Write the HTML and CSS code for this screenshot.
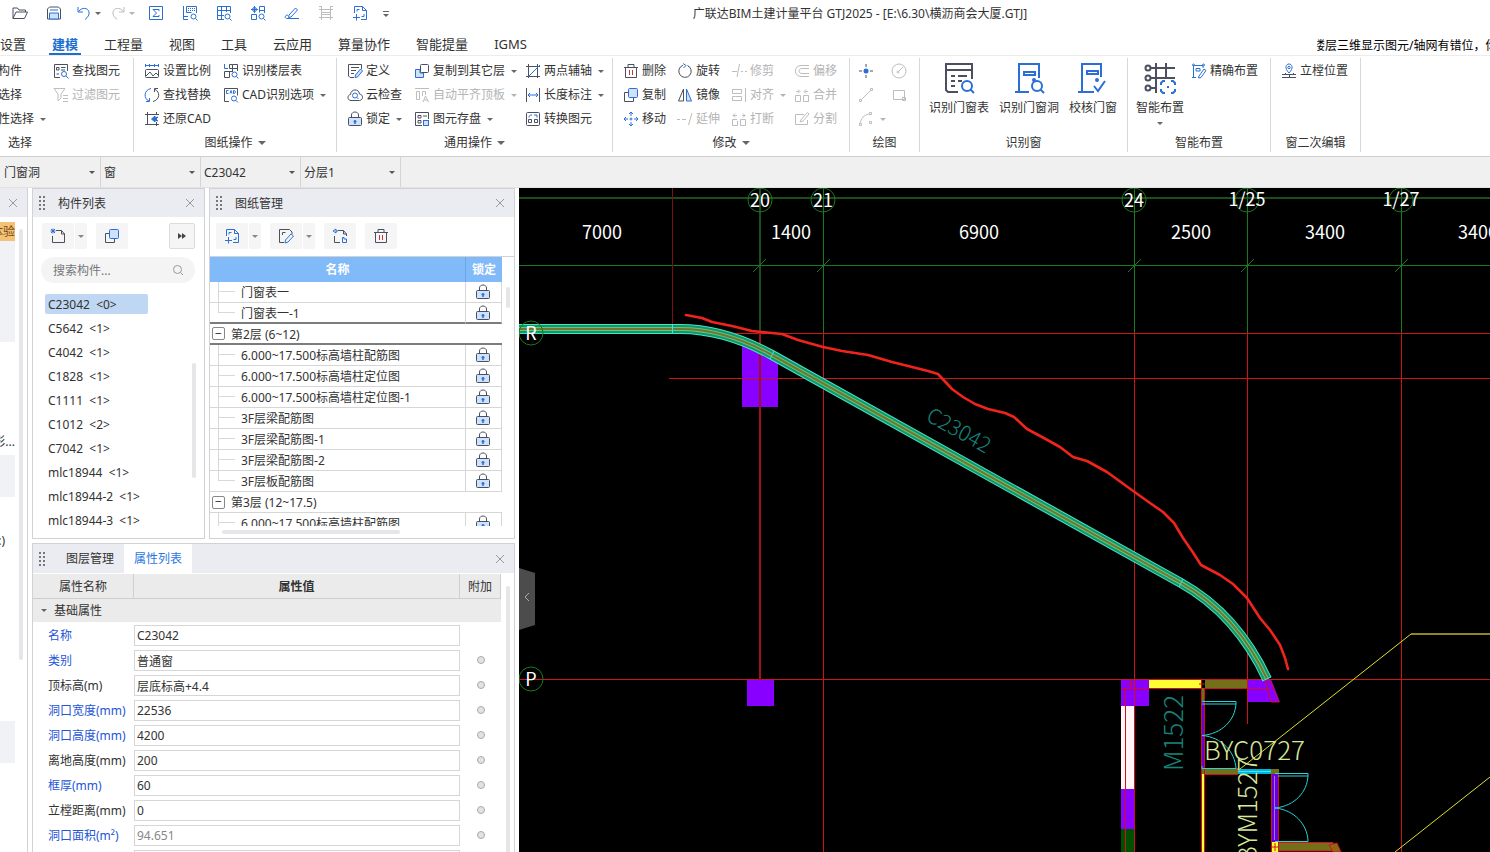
FILE: index.html
```html
<!DOCTYPE html>
<html lang="zh-CN">
  <head>
    <meta charset="utf-8">
    <title>广联达BIM土建计量平台 GTJ2025</title>
    <link rel="stylesheet" href="styles.css">
  </head>
  <body>
    <!-- icon sprite -->
    <svg class="sprite" aria-hidden="true">
      <symbol id="open" viewBox="0 0 16 16"><path d="M1 13.500V3h4.500l1.500 2h6.500v2M1 13.500h11.500L15.500 7H4z"/></symbol>
      <symbol id="save" viewBox="0 0 16 16"><path d="M1.500 14V4l2-2h9l2 2v10z"/><path class="b l" d="M3.500 14V8h9v6z"/><path class="b" d="M4 5h8"/></symbol>
      <symbol id="undo" viewBox="0 0 16 16"><path d="M2 2v5h5M2.500 6.500C6 2 12 2.500 13 7c.5 3-1 5-4 7.500"/></symbol>
      <symbol id="redo" viewBox="0 0 16 16"><path d="M14 2v5H9M13.500 6.500C10 2 4 2.500 3 7c-.5 3 1 5 4 7.500"/></symbol>
      <symbol id="sum" viewBox="0 0 16 16"><path class="b" d="M1.500 1.500h13v13h-13zM11 6V4.500H5L8.500 8 5 11.500h6V10"/></symbol>
      <symbol id="tablefind" viewBox="0 0 16 16"><path class="b" d="M1.500 1v13.500H6M1.500 11.500H6M4.500 1.500h10V8M4.500 1.500v6h5"/><path class="b" stroke-dasharray="1 1" d="M6 3.500h8M6 5.500h8"/><circle class="b" cx="11.500" cy="11.500" r="2.500"/><path class="b" d="M13.500 13.500l2 2"/></symbol>
      <symbol id="gridfind" viewBox="0 0 16 16"><path class="b" d="M8 14.500H1.500v-13h13V8M1.500 5.500h13M1.500 10.500H8M5.500 1.500v13M10.500 1.500V7"/><circle class="b" cx="11.500" cy="11.500" r="2.500"/><path class="b" d="M13.500 13.500l2 2"/></symbol>
      <symbol id="treefind" viewBox="0 0 16 16"><path class="b" d="M9.500 1.500h5V8M9.500 7.500v-6M9.500 5.500h5M1.500 9.500h5v5h-5zM1 4.500h7M4.500 1v7"/><circle class="b" cx="4.500" cy="4.500" r="2"/><circle class="b" cx="11.500" cy="11.500" r="2.500"/><path class="b" d="M13.500 13.500l2 2"/></symbol>
      <symbol id="pen" viewBox="0 0 16 16"><path class="b" d="M5 10l6.500-7 2 2L7 12l-2.500.5zM4 10c-3 0-4 3-1 3.500h12"/></symbol>
      <symbol id="fence" viewBox="0 0 16 16"><path d="M3.500 1v14M12.500 1v14M1 4.500h14M1 12.500h14M3 7.500h10M3 9.500h10M1 1.500h2M13 1.500h2"/></symbol>
      <symbol id="addsheet" viewBox="0 0 16 16"><path class="b" d="M2.500 8V1.500h8l4 4v9H9M10.500 1.500v4h4M5 6.500v-2h2.500M12 9v2.500H9.500M4.500 9v6.500M1 12.500h7"/></symbol>
      <symbol id="find" viewBox="0 0 16 16"><path d="M7 14.500H1.500v-13h13V8M3.500 4.500H6V7H3.500zM8 4.500h4.500M8 7h4M3.500 11H6"/><circle class="b" cx="11" cy="11" r="2.500"/><path class="b" d="M13 13l2.500 2.500"/></symbol>
      <symbol id="filter" viewBox="0 0 16 16"><path d="M1 1.500h11L8 7v4l-3 3V7zM10 8.500h5M10 11.500h5M10 14.500h5"/></symbol>
      <symbol id="scale" viewBox="0 0 16 16"><path class="b" d="M1 2.500h14M1.500 1v3M14.500 1v3M5.500 1v3M10.500 1v3"/><rect x="1.500" y="6.500" width="13" height="8" rx="1"/><path d="M2 13l4-4 3 4 3-3 3 3"/></symbol>
      <symbol id="replace" viewBox="0 0 16 16"><path class="b" d="M7 1.500C-.5 3-.5 12 5 14M2 14.500h3.500V11"/><path d="M9 14.500c7.500-2 7-10 2-12M14 1.500h-3.500V5"/></symbol>
      <symbol id="restore" viewBox="0 0 16 16"><path d="M3.500 1v13M1 3.500h14M12.500 1v3M1 13.500h14M12.500 11v4"/><path class="b" fill="#2b6fd6" d="M7.500 8L11 5v2l3-1-2 2 2 2-3-1v2z"/></symbol>
      <symbol id="floor" viewBox="0 0 16 16"><path class="b" d="M1.500 1v4.500H5"/><path d="M6.500 1.500h3v4h-3zM6.500 8.500v6h-5v-6H9M9.500 1.500h5V8M9.500 5.500h5M9.500 5.500V9"/><circle class="b" cx="11.500" cy="11.500" r="2.500"/><path class="b" d="M13.500 13.500l2 2"/></symbol>
      <symbol id="cadopt" viewBox="0 0 16 16"><path d="M6 14.500H1.500v-13h13v7"/><path class="b" d="M5.500 3.500h-2v3h2M7 6.500l1-3 1 3M10.500 3.500v3h1l1-1.500-1-1.500z"/><circle class="b" cx="11" cy="11.500" r="2.500"/><path class="b" d="M13 13.500l2 2"/></symbol>
      <symbol id="define" viewBox="0 0 16 16"><path d="M7 14.500H3l-1.500-1.500v-11.500h13V6M4 4.500h8M4 7.500h5M4 10.500h3"/><path class="b l" d="M8.500 12l5-6 2 2-5 6-2.500.5z"/></symbol>
      <symbol id="cloud" viewBox="0 0 16 16"><path d="M4 13.500C0 13.500 0 8 3.500 7.500 4 1.500 12 1.500 12.500 7c4 .5 4 6 0 6.500z"/><circle class="b" cx="8" cy="8.500" r="2.500"/><path class="b" d="M10 10.500l1.500 1.500"/></symbol>
      <symbol id="lock" viewBox="0 0 16 16"><path d="M4.500 7V4c0-4 7-4 7 0v3"/><rect class="l" x="1.500" y="6.500" width="13" height="8" rx="1"/><path class="b" stroke-width="1.500" d="M8 13V9M6.500 10.500h3"/></symbol>
      <symbol id="copy" viewBox="0 0 16 16"><path d="M5 5.500H1.500v9h9V11"/><rect class="b l" x="5.500" y="1.500" width="9" height="9" rx="1"/></symbol>
      <symbol id="copylayer" viewBox="0 0 16 16"><path class="b l" d="M6 6.500H1.500v8h8V10H6z"/><rect x="6.500" y="1.500" width="8" height="8" rx="1"/></symbol>
      <symbol id="aligntop" viewBox="0 0 16 16"><path d="M1 1.500h14M2.500 4.500h3v8h-3zM8.500 9V4.500h3V8M9 15l2.500-6 3 6M10 13h3.500"/></symbol>
      <symbol id="store" viewBox="0 0 16 16"><path d="M8 14.500H1.500v-13h13V8M4 4.500h3V7H4zM9 5h4M4 9.500h3V12H4z"/><rect class="b l" x="9.500" y="9.500" width="5" height="5"/></symbol>
      <symbol id="axis" viewBox="0 0 16 16"><path d="M3.500 1v14M1 3.500h14M12.500 1v14M1 13.500h14"/><path class="b" d="M3 14L15 2"/></symbol>
      <symbol id="length" viewBox="0 0 16 16"><path d="M1.500 1v14M14.500 1v14"/><path class="b" d="M3 8h10M5 6L3 8l2 2M11 6l2 2-2 2"/></symbol>
      <symbol id="convert" viewBox="0 0 16 16"><rect x="1.500" y="1.500" width="13" height="13" rx="1"/><path d="M3.500 8.500h3v3h-3zM9.500 8.500h3v3h-3z"/><path class="b" d="M4 6.500c0-2 1-2.500 3-2.500M9 4h3v2.500"/></symbol>
      <symbol id="trash" viewBox="0 0 16 16"><path d="M1 4.500h14M5 4V1.500h6V4M2.500 4v10.500h11V4"/><path class="r" d="M6.500 7v5M9.500 7v5"/></symbol>
      <symbol id="rotate" viewBox="0 0 16 16"><path d="M10.500 2.500A6.200 6.200 0 1 1 6 2.300"/><path class="b" d="M6 .5l3 2-2.500 2.500M11 3l1 1"/></symbol>
      <symbol id="mirror" viewBox="0 0 16 16"><path d="M6.500 2v12h-5z"/><path class="b l" d="M9.500 2v12h5z"/></symbol>
      <symbol id="move" viewBox="0 0 16 16"><path class="b" d="M8 1v4M8 11v4M1 8h4M11 8h4M6 3l2-2 2 2M6 13l2 2 2-2M3 6L1 8l2 2M13 6l2 2-2 2M6.500 8h3M8 6.500v3"/></symbol>
      <symbol id="trim" viewBox="0 0 16 16"><path d="M1 8.500h5M8.500 1L6 14M10 8.500h2M14 8.500h2"/></symbol>
      <symbol id="extend" viewBox="0 0 16 16"><path d="M0 8.500h3M5 8.500h4M15 2l-3.500 12"/></symbol>
      <symbol id="align" viewBox="0 0 16 16"><path d="M1.500 2.500h9v4h-9zM4.500 9.500h6v4h-9v-4zM14.500 1v14"/></symbol>
      <symbol id="break" viewBox="0 0 16 16"><path d="M6 8.500H1.500v6h5V10M9.500 8.500v6h5v-6zM2 4.500h4M4 2.500l-2 2 2 2M14 4.500h-3M12 2.500l2 2-2 2"/></symbol>
      <symbol id="offset" viewBox="0 0 16 16"><path d="M15 2.500H7C-.5 2.500-.5 13.500 7 13.500h8M15 5.500H8c-4 0-4 5 0 5h7"/></symbol>
      <symbol id="merge" viewBox="0 0 16 16"><path d="M1.500 8.500h5v6h-5zM9.500 8.500h5v6h-5zM2 4.500h3M4 2.500l2 2-2 2M14 4.500h-3M12 2.500l-2 2 2 2"/></symbol>
      <symbol id="split" viewBox="0 0 16 16"><path d="M10 3.500H1.500v10h12V9M6 11l3-1 6-7-1.500-1.500-6 6.500z"/></symbol>
      <symbol id="point" viewBox="0 0 16 16"><path d="M8 1v3M8 12v3M1 8h3M12 8h3"/><circle cx="8" cy="8" r="2.500" fill="#2b6fd6" stroke="none"/></symbol>
      <symbol id="circle" viewBox="0 0 16 16"><circle cx="8" cy="8" r="7"/><path d="M8 8l4-4"/><circle cx="7" cy="9" r="1"/></symbol>
      <symbol id="line" viewBox="0 0 16 16"><path d="M3 13L13 3"/><path d="M1.500 12.500h2v2h-2zM12.500 1.500h2v2h-2z"/></symbol>
      <symbol id="rect" viewBox="0 0 16 16"><path d="M2.500 3.500h11v9h-11zM11.500 10.500h3v3h-3z"/></symbol>
      <symbol id="arc" viewBox="0 0 16 16"><path d="M2 13C3 7 6 4 11 3M1.500 12.500h2v2h-2zM11.500 1.500h2v2h-2zM11.500 10.500h2v2h-2z"/></symbol>
      <symbol id="doorlist" viewBox="0 0 32 32"><path d="M15 30H5l-2-2V2h26v15M3 8h26M8 14h4M15 14h9M8 19h4M15 19h4M8 24h4"/><circle class="b" cx="24" cy="24" r="5"/><path class="b" d="M27.500 27.500L31 31"/></symbol>
      <symbol id="doorhole" viewBox="0 0 32 32"><path class="b" d="M2 30h14M6 30V2h20v14M11 10h11v3H11z"/><circle cx="21" cy="18" r="2" fill="#2b6fd6" stroke="none"/><circle class="b" cx="24" cy="24" r="5"/><path class="b" d="M27.500 27.500L31 31"/></symbol>
      <symbol id="doorcheck" viewBox="0 0 32 32"><path class="b" d="M1 30h16M5 30V2h19v13M10 9h11v3H10zM17 24l4 5 7-10"/><circle cx="20" cy="18" r="2" fill="#2b6fd6" stroke="none"/></symbol>
      <symbol id="smart" viewBox="0 0 32 32"><path d="M6 6h25M6 16h25M6 26h6M12 1v30M22 1v14"/><circle cx="4" cy="6" r="2.500"/><circle cx="4" cy="16" r="2.500"/><circle cx="4" cy="26" r="2.500"/><path class="b" d="M17 23v-2l2-2h2M27 19h2l2 2v2M31 27v2l-2 2h-2M21 31h-2l-2-2v-2M23 25h2"/></symbol>
      <symbol id="exact" viewBox="0 0 16 16"><path class="b" d="M1 14.500h4M2.500 14V2.500M3 2.500h9V5M5 5.500h4V8H5zM8 13l5-7 2 1.500-5 7-2.500.5z"/><circle class="b" cx="2.500" cy="2" r="1"/><circle class="b" cx="12.500" cy="2" r="1"/></symbol>
      <symbol id="pin" viewBox="0 0 16 16"><path class="b" d="M8 10C3 5 5 1 8 1s5 4 0 9z"/><circle class="b" cx="8" cy="4.500" r="1.200"/><path d="M1 11.500h14M1 14.500h14M4.500 10v2M8.500 12v2M12.500 10v2"/></symbol>
      <symbol id="newsheet" viewBox="0 0 16 16"><path d="M6 2.500h5.500l3 3.500v8.500h-12V8M11.500 2.500V6H15"/><path class="b" d="M1 1l4 4M5 1L1 5M3 .5v5M.5 3h5"/></symbol>
      <symbol id="editsheet" viewBox="0 0 16 16"><path d="M6 14.500H1.500v-13h10L14 4v2M4.500 7V4.500h3"/><path class="b" d="M7.500 12l5.500-6 2.500 2-5.500 6-3 1z"/></symbol>
      <symbol id="movesheet" viewBox="0 0 16 16"><path d="M6 2.500h5.500l3 3.500v2M11.500 2.500V6h3M2.500 8v6.500H8"/><path class="b" d="M1 3l3-2v4zM4 3h2M10.500 14.500v-5H12V11h2.500v3.500z"/></symbol>
      <symbol id="search" viewBox="0 0 12 12"><circle cx="5.500" cy="5.500" r="4"/><path d="M8.500 8.500L11 11"/></symbol>
      <symbol id="close" viewBox="0 0 10 10"><path d="M1 1l8 8M9 1L1 9"/></symbol>
      <symbol id="grip" viewBox="0 0 6 14"><path stroke-width="2" stroke-dasharray="2 2" d="M1 0v14M5 0v14"/></symbol>
    </svg>

    <header class="titlebar">
      <button class="quick"><svg class="ic"><use href="#open"/></svg></button>
      <button class="quick"><svg class="ic"><use href="#save"/></svg></button>
      <button class="quick blue"><svg class="ic"><use href="#undo"/></svg><i class="arrow"></i></button>
      <button class="quick" disabled><svg class="ic"><use href="#redo"/></svg><i class="arrow"></i></button>
      <button class="quick"><svg class="ic"><use href="#sum"/></svg></button>
      <button class="quick"><svg class="ic"><use href="#tablefind"/></svg></button>
      <button class="quick"><svg class="ic"><use href="#gridfind"/></svg></button>
      <button class="quick"><svg class="ic"><use href="#treefind"/></svg></button>
      <button class="quick"><svg class="ic"><use href="#pen"/></svg></button>
      <button class="quick" disabled><svg class="ic"><use href="#fence"/></svg></button>
      <button class="quick"><svg class="ic"><use href="#addsheet"/></svg></button>
      <button class="quick more"><i></i><i class="arrow"></i></button>
      <h1>广联达BIM土建计量平台 GTJ2025 - [E:\6.30\横沥商会大厦.GTJ]</h1>
    </header>

    <nav class="tabs">
      <a href="#">设置</a>
      <a href="#" class="active">建模</a>
      <a href="#">工程量</a>
      <a href="#">视图</a>
      <a href="#">工具</a>
      <a href="#">云应用</a>
      <a href="#">算量协作</a>
      <a href="#">智能提量</a>
      <a href="#">IGMS</a>
      <div class="notice"><span>楼层三维显示图元/轴网有错位，你</span></div>
    </nav>

    <div class="ribbon">
      <section class="group g-select">
        <div class="tools">
          <button>构件</button>
          <button><svg class="ic"><use href="#find"/></svg>查找图元</button>
          <button>选择</button>
          <button disabled><svg class="ic"><use href="#filter"/></svg>过滤图元</button>
          <button>性选择<i class="arrow"></i></button>
        </div>
        <h2>选择</h2>
      </section>
      <section class="group g-drawing">
        <div class="tools">
          <button><svg class="ic"><use href="#scale"/></svg>设置比例</button>
          <button><svg class="ic"><use href="#floor"/></svg>识别楼层表</button>
          <button><svg class="ic"><use href="#replace"/></svg>查找替换</button>
          <button><svg class="ic"><use href="#cadopt"/></svg>CAD识别选项<i class="arrow"></i></button>
          <button><svg class="ic"><use href="#restore"/></svg>还原CAD</button>
        </div>
        <h2>图纸操作<i class="arrow big"></i></h2>
      </section>
      <section class="group g-common">
        <div class="tools">
          <button><svg class="ic"><use href="#define"/></svg>定义</button>
          <button><svg class="ic"><use href="#copylayer"/></svg>复制到其它层<i class="arrow"></i></button>
          <button><svg class="ic"><use href="#axis"/></svg>两点辅轴<i class="arrow"></i></button>
          <button><svg class="ic"><use href="#cloud"/></svg>云检查</button>
          <button disabled><svg class="ic"><use href="#aligntop"/></svg>自动平齐顶板<i class="arrow"></i></button>
          <button><svg class="ic"><use href="#length"/></svg>长度标注<i class="arrow"></i></button>
          <button><svg class="ic"><use href="#lock"/></svg>锁定<i class="arrow"></i></button>
          <button><svg class="ic"><use href="#store"/></svg>图元存盘<i class="arrow"></i></button>
          <button><svg class="ic"><use href="#convert"/></svg>转换图元</button>
        </div>
        <h2>通用操作<i class="arrow big"></i></h2>
      </section>
      <section class="group g-modify">
        <div class="tools">
          <button><svg class="ic"><use href="#trash"/></svg>删除</button>
          <button><svg class="ic"><use href="#rotate"/></svg>旋转</button>
          <button disabled><svg class="ic"><use href="#trim"/></svg>修剪</button>
          <button disabled><svg class="ic"><use href="#offset"/></svg>偏移</button>
          <button><svg class="ic"><use href="#copy"/></svg>复制</button>
          <button><svg class="ic"><use href="#mirror"/></svg>镜像</button>
          <button disabled><svg class="ic"><use href="#align"/></svg>对齐<i class="arrow"></i></button>
          <button disabled><svg class="ic"><use href="#merge"/></svg>合并</button>
          <button><svg class="ic"><use href="#move"/></svg>移动</button>
          <button disabled><svg class="ic"><use href="#extend"/></svg>延伸</button>
          <button disabled><svg class="ic"><use href="#break"/></svg>打断</button>
          <button disabled><svg class="ic"><use href="#split"/></svg>分割</button>
        </div>
        <h2>修改<i class="arrow big"></i></h2>
      </section>
      <section class="group g-draw">
        <div class="tools">
          <button aria-label="点"><svg class="ic"><use href="#point"/></svg></button>
          <button aria-label="圆" disabled><svg class="ic"><use href="#circle"/></svg></button>
          <button aria-label="直线" disabled><svg class="ic"><use href="#line"/></svg></button>
          <button aria-label="矩形" disabled><svg class="ic"><use href="#rect"/></svg></button>
          <button aria-label="弧" disabled><svg class="ic"><use href="#arc"/></svg><i class="arrow"></i></button>
        </div>
        <h2>绘图</h2>
      </section>
      <section class="group g-window">
        <div class="bigs">
          <button class="big"><svg class="ic32"><use href="#doorlist"/></svg>识别门窗表</button>
          <button class="big"><svg class="ic32"><use href="#doorhole"/></svg>识别门窗洞</button>
          <button class="big"><svg class="ic32"><use href="#doorcheck"/></svg>校核门窗</button>
        </div>
        <h2>识别窗</h2>
      </section>
      <section class="group g-smart">
        <div class="bigs">
          <button class="big"><svg class="ic32"><use href="#smart"/></svg>智能布置<i class="arrow"></i></button>
          <button><svg class="ic"><use href="#exact"/></svg>精确布置</button>
        </div>
        <h2>智能布置</h2>
      </section>
      <section class="group g-edit">
        <div class="bigs">
          <button><svg class="ic"><use href="#pin"/></svg>立樘位置</button>
        </div>
        <h2>窗二次编辑</h2>
      </section>
    </div>

    <div class="combos">
      <label><select aria-label="构件大类"><option>门窗洞</option></select></label>
      <label><select aria-label="构件类型"><option>窗</option></select></label>
      <label><select aria-label="构件"><option>C23042</option></select></label>
      <label><select aria-label="分层"><option>分层1</option></select></label>
    </div>

    <main>
      <aside class="edge">
        <div class="edge-head"><button class="close" aria-label="关闭"><svg><use href="#close"/></svg></button></div>
        <div class="edge-body">
          <div class="edge-list">
            <div class="promo">体验</div>
            <div class="block tall"></div>
            <div class="space one">影...</div>
            <div class="block"></div>
            <div class="space two">:)</div>
            <div class="block"></div>
          </div>
          <div class="thumb"></div>
        </div>
      </aside>

      <div class="dock">
        <div class="dock-top">
          <section class="panel components">
            <header><svg class="grip"><use href="#grip"/></svg><h3>构件列表</h3><button class="close" aria-label="关闭"><svg><use href="#close"/></svg></button></header>
            <div class="bar">
              <span class="splitbtn"><button><svg class="ic"><use href="#newsheet"/></svg></button><button class="drop"><i class="arrow"></i></button></span>
              <button><svg class="ic"><use href="#copy"/></svg></button>
              <button class="expand"><i></i><i></i></button>
            </div>
            <div class="search">
              <input type="text" placeholder="搜索构件..." aria-label="搜索构件">
              <svg><use href="#search"/></svg>
            </div>
            <div class="listwrap">
              <ul>
                <li class="on">C23042  &lt;0&gt;</li>
                <li>C5642  &lt;1&gt;</li>
                <li>C4042  &lt;1&gt;</li>
                <li>C1828  &lt;1&gt;</li>
                <li>C1111  &lt;1&gt;</li>
                <li>C1012  &lt;2&gt;</li>
                <li>C7042  &lt;1&gt;</li>
                <li>mlc18944  &lt;1&gt;</li>
                <li>mlc18944-2  &lt;1&gt;</li>
                <li>mlc18944-3  &lt;1&gt;</li>
              </ul>
              <div class="thumb"></div>
            </div>
          </section>

          <section class="panel drawings">
            <header><svg class="grip"><use href="#grip"/></svg><h3>图纸管理</h3><button class="close" aria-label="关闭"><svg><use href="#close"/></svg></button></header>
            <div class="bar">
              <span class="splitbtn"><button><svg class="ic"><use href="#addsheet"/></svg></button><button class="drop"><i class="arrow"></i></button></span>
              <span class="splitbtn"><button><svg class="ic"><use href="#editsheet"/></svg></button><button class="drop"><i class="arrow"></i></button></span>
              <button><svg class="ic"><use href="#movesheet"/></svg></button>
              <button><svg class="ic"><use href="#trash"/></svg></button>
            </div>
            <div class="treewrap">
              <div class="treebox">
                <table class="tree">
                  <thead><tr><th>名称</th><th class="lockcol">锁定</th></tr></thead>
                  <tbody>
                    <tr><td>门窗表一</td><td><svg class="ic"><use href="#lock"/></svg></td></tr>
                    <tr class="last before"><td>门窗表一-1</td><td><svg class="ic"><use href="#lock"/></svg></td></tr>
                    <tr class="floor current"><td colspan="2"><button class="fold">−</button>第2层 (6~12)</td></tr>
                    <tr><td>6.000~17.500标高墙柱配筋图</td><td><svg class="ic"><use href="#lock"/></svg></td></tr>
                    <tr><td>6.000~17.500标高墙柱定位图</td><td><svg class="ic"><use href="#lock"/></svg></td></tr>
                    <tr><td>6.000~17.500标高墙柱定位图-1</td><td><svg class="ic"><use href="#lock"/></svg></td></tr>
                    <tr><td>3F层梁配筋图</td><td><svg class="ic"><use href="#lock"/></svg></td></tr>
                    <tr><td>3F层梁配筋图-1</td><td><svg class="ic"><use href="#lock"/></svg></td></tr>
                    <tr><td>3F层梁配筋图-2</td><td><svg class="ic"><use href="#lock"/></svg></td></tr>
                    <tr class="last"><td>3F层板配筋图</td><td><svg class="ic"><use href="#lock"/></svg></td></tr>
                    <tr class="floor"><td colspan="2"><button class="fold">−</button>第3层 (12~17.5)</td></tr>
                    <tr><td>6.000~17.500标高墙柱配筋图</td><td><svg class="ic"><use href="#lock"/></svg></td></tr>
                  </tbody>
                </table>
              </div>
              <div class="thumb"></div>
            </div>
            <div class="hthumb"></div>
          </section>
        </div>

        <section class="panel props">
          <header>
            <svg class="grip"><use href="#grip"/></svg>
            <button class="ptab">图层管理</button>
            <button class="ptab active">属性列表</button>
            <button class="close" aria-label="关闭"><svg><use href="#close"/></svg></button>
          </header>
          <div class="propwrap">
            <table>
              <thead><tr><th class="name">属性名称</th><th class="value">属性值</th><th class="extra">附加</th></tr></thead>
              <tbody>
                <tr class="section"><td colspan="3"><i class="arrow"></i>基础属性</td></tr>
                <tr><td class="key"><label for="p1">名称</label></td><td><input id="p1" type="text" value="C23042"></td><td></td></tr>
                <tr><td class="key"><label for="p2">类别</label></td><td><input id="p2" type="text" value="普通窗"></td><td><input type="radio" aria-label="附加类别"></td></tr>
                <tr><td><label for="p3">顶标高(m)</label></td><td><input id="p3" type="text" value="层底标高+4.4"></td><td><input type="radio" aria-label="附加顶标高"></td></tr>
                <tr><td class="key"><label for="p4">洞口宽度(mm)</label></td><td><input id="p4" type="text" value="22536"></td><td><input type="radio" aria-label="附加洞口宽度"></td></tr>
                <tr><td class="key"><label for="p5">洞口高度(mm)</label></td><td><input id="p5" type="text" value="4200"></td><td><input type="radio" aria-label="附加洞口高度"></td></tr>
                <tr><td><label for="p6">离地高度(mm)</label></td><td><input id="p6" type="text" value="200"></td><td><input type="radio" aria-label="附加离地高度"></td></tr>
                <tr><td class="key"><label for="p7">框厚(mm)</label></td><td><input id="p7" type="text" value="60"></td><td><input type="radio" aria-label="附加框厚"></td></tr>
                <tr><td><label for="p8">立樘距离(mm)</label></td><td><input id="p8" type="text" value="0"></td><td><input type="radio" aria-label="附加立樘距离"></td></tr>
                <tr><td class="key"><label for="p9">洞口面积(m²)</label></td><td><input id="p9" type="text" value="94.651" readonly></td><td><input type="radio" aria-label="附加洞口面积"></td></tr>
                <tr><td></td><td><input type="text" aria-label="下一属性"></td><td></td></tr>
              </tbody>
            </table>
            <div class="thumb"></div>
          </div>
        </section>
      </div>

      <div class="canvas">
        <svg viewBox="519 188 971 664" preserveAspectRatio="xMinYMin slice">
          <defs>
            <path id="win" d="M519 329H680Q725 329 772 355L1181 583C1215 602 1246 634 1267 679"/>
          </defs>
          <!-- columns -->
          <g fill="#8800ff">
            <path d="M742 345L778 363V407H742z"/>
            <path d="M747 680h27v26h-27zM1121 679h28v27h-28zM1121 789h13v40h-13zM1247 679h24l9 23h-33z"/>
          </g>
          <!-- axis grid -->
          <g fill="none" stroke="#1c4d1c" stroke-width="2"><path d="M519 198H1490M760 188V333"/></g>
          <g fill="none" stroke="#177a1e">
            <path d="M753 272l13-13M817 272l13-13M1128 272l13-13M1241 272l13-13M1395 272l13-13"/>
            <circle cx="760" cy="200" r="12"/><circle cx="823" cy="200" r="12"/><circle cx="1134" cy="200" r="12"/>
            <circle cx="1247" cy="200" r="12"/><circle cx="1401" cy="200" r="12"/>
          </g>
          <g fill="#177a1e">
            <rect x="519" y="265" width="971" height="1"/>
            <rect x="823" y="188" width="1" height="145"/>
            <rect x="1134" y="188" width="1" height="145"/>
            <rect x="1247" y="188" width="1" height="145"/>
            <rect x="1401" y="188" width="1" height="145"/>
          </g>
          <g fill="#cc1616">
            <rect x="519" y="333" width="971" height="1"/>
            <rect x="669" y="378" width="821" height="1"/>
            <rect x="519" y="679" width="971" height="1"/>
            <rect x="823" y="333" width="1" height="519"/>
            <rect x="1134" y="333" width="1" height="519"/>
            <rect x="1247" y="333" width="1" height="391"/>
            <rect x="1401" y="333" width="1" height="519"/>
            <rect x="672" y="188" width="1" height="137" fill="#7a1010"/>
            <rect x="759" y="333" width="2" height="347" fill="#a0101c"/>
          </g>
          <!-- walls -->
          <path fill="#ffff33" d="M1149 680h52v8h-52zM1202 774h3v78h-3zM1271 842h8v10h-8z"/>
          <path fill="#74701a" d="M1205 680h42v8h-42zM1201 688h4v14h-4zM1201 769h37v5h-37zM1271 769h8v5h-8zM1279 842h54v9h-54z"/>
          <path fill="#fff5f7" d="M1121 706h13v83h-13z"/>
          <path fill="#005000" d="M1121 829h13v23h-13z"/>
          <path fill="#00b4e0" d="M1238 769h33v5h-33z"/>
          <path fill="#6a00d8" d="M1202 702h3v67h-3zM1272 774h6v68h-6z"/>
          <g fill="none" stroke="#d01020">
            <path d="M1125.500 688V852M1134.500 706V852M1121 688.500H1201M1201.500 680V852M1204.500 688V852M1205 679.500H1247M1205 688.500H1270"/>
            <path d="M1126 684h8M1131 680v8M1199 684h6M1201 768.500H1240M1204 774.500H1238"/>
            <path d="M1270 680l9 22h-8l-6-22zM1271.500 774V852M1278.500 774V852M1279 842.500H1333V851H1279M1271 847h8M1275 843v8"/>
            <path fill="#8a6a10" d="M1329 845l8-2 4 9h-8z"/>
          </g>
          <path fill="none" stroke="#3fe8f0" d="M1238 771.500H1271"/>
          <path fill="none" stroke="#a070f0" d="M1274.500 776V840"/>
          <!-- doors -->
          <g fill="none" stroke="#28d4d8">
            <path d="M1202 701.500H1236V704H1202M1236 704C1235 720 1222 734 1202 735.500C1222 737 1235 752 1236 768.500H1202V766"/>
            <path d="M1275 773.500H1308V776H1278M1308 776C1307 792 1295 806 1275 808C1295 810 1307 825 1308 840V841.500H1275"/>
          </g>
          <!-- leader lines -->
          <path fill="none" stroke="#8c8820" stroke-width="2" d="M1411 634H1490"/>
          <path fill="none" stroke="#dede28" d="M1411 634L1240 769M1490 777L1395 852"/>
          <!-- curved window: frame lines stacked from wide to narrow -->
          <g fill="none">
            <use href="#win" stroke="#45e6c8" stroke-width="10"/>
            <use href="#win" stroke="#159468" stroke-width="8"/>
            <use href="#win" stroke="#5bc885" stroke-width="4"/>
            <use href="#win" stroke="#77742a" stroke-width="2"/>
            <path stroke="#35e8e0" d="M672.500 324V334M774 351l-4 8M1183 579l-4 8M1262 681l9-4"/>
          </g>
          <!-- hand-drawn markup -->
          <path fill="none" stroke="#f0241c" stroke-width="2.600" stroke-linecap="round" stroke-linejoin="round" d="M686 315L702 318 712 322 732 326 752 331 782 334 798 340 823 347 842 351 868 355 892 362 912 367 928 371 938 374 952 389 963 397 975 404 988 409 1005 413 1014 417 1027 429 1042 437 1060 447 1073 457 1087 461 1107 472 1129 488 1150 503 1163 512 1174 523 1183 538 1192 551 1201 565 1220 575 1233 584 1247 598 1260 618 1270 630 1280 645 1285 658 1288 669"/>
          <g fill="none" stroke="#177a1e"><circle cx="531" cy="333" r="12"/><circle cx="531" cy="679" r="12"/></g>
          <g class="axis">
            <text x="760" y="207">20</text><text x="823" y="207">21</text><text x="1134" y="207">24</text>
            <text x="1247" y="206">1/25</text><text x="1401" y="206">1/27</text>
            <text x="602" y="239">7000</text><text x="791" y="239">1400</text><text x="979" y="239">6900</text>
            <text x="1191" y="239">2500</text><text x="1325" y="239">3400</text><text x="1478" y="239">3400</text>
            <text x="531" y="340">R</text><text x="531" y="686">P</text>
          </g>
          <g class="cad">
            <text class="teal small" transform="translate(925 420) rotate(29)">C23042</text>
            <text class="teal" transform="translate(1183 771) rotate(-90)">M1522</text>
            <text x="1204" y="760">BYC0727</text>
            <text transform="translate(1257 863) rotate(-90)">BYM1527</text>
          </g>
        </svg>
        <button class="collapse" aria-label="收起"><svg viewBox="0 0 8 12"><path d="M6 2L2 6l4 4"/></svg></button>
      </div>
    </main>
  </body>
</html>
```

FILE: styles.css
```css
* {
  box-sizing: border-box;
}
:root {
  --blue: #2b6fd6;
  --dark: #4a5060;
  --line: #d2d2d6;
  --head: #ebecf1;
}
body {
  margin: 0;
  height: 100vh;
  display: flex;
  flex-direction: column;
  overflow: hidden;
  background: #fff;
  color: #333;
  font: 12px/16px "Noto Sans", "Noto Sans CJK SC", sans-serif;
}
button {
  margin: 0;
  padding: 0;
  border: 0;
  background: none;
  color: inherit;
  font: inherit;
  white-space: nowrap;
}
button:disabled {
  color: #b4b4b4;
}
input, select {
  font: inherit;
  color: inherit;
}
h1, h2, h3 {
  margin: 0;
  font-size: 12px;
  font-weight: normal;
}
.sprite {
  display: none;
}

/* icons */
.ic, .ic32 {
  flex: none;
  width: 16px;
  height: 16px;
  fill: none;
  stroke: var(--dark);
}
.ic32 {
  width: 32px;
  height: 32px;
  stroke-width: 2;
}
.b {
  stroke: var(--blue);
}
.l {
  fill: #cfe2fb;
}
.r {
  stroke: #c8323c;
}
.blue .ic {
  stroke: var(--blue);
}
button:disabled .ic {
  stroke: #bdbdbd;
}
.arrow {
  flex: none;
  display: inline-block;
  border: 3px solid transparent;
  border-top-color: #666;
  border-bottom: 0;
}
button:disabled .arrow {
  border-top-color: #b4b4b4;
}
.arrow.big {
  border-width: 4px 4px 0;
}

/* title bar */
.titlebar {
  flex: none;
  display: flex;
  align-items: center;
  height: 28px;
  padding: 0 165px 0 3px;
}
.quick {
  flex: none;
  display: flex;
  align-items: center;
  justify-content: center;
  gap: 3px;
  width: 34px;
  height: 28px;
  padding-bottom: 2px;
}
.more {
  flex-direction: column;
  gap: 2px;
  width: 18px;
  padding: 0;
}
.more i:first-child {
  width: 6px;
  height: 1px;
  background: #666;
}
.titlebar h1 {
  flex: 1;
  text-align: center;
  white-space: nowrap;
}

/* tabs */
.tabs {
  flex: none;
  display: flex;
  gap: 26px;
  height: 28px;
  border-bottom: 1px solid #ececec;
  font-size: 13px;
  line-height: 32px;
}
.tabs a {
  color: #333;
  text-decoration: none;
  white-space: nowrap;
}
.tabs .active {
  margin: 0 -3px;
  padding: 0 3px;
  border-bottom: 2px solid #1a6fd0;
  color: #1a6fd0;
  font-weight: bold;
}
.notice {
  width: 173px;
  margin-left: auto;
  overflow: hidden;
  color: #000;
  font-size: 12px;
  line-height: 35px;
  white-space: nowrap;
}
.notice span {
  margin-left: -4px;
}

/* ribbon */
.ribbon {
  flex: none;
  display: flex;
  height: 101px;
  padding: 2px 0 4px;
  border-bottom: 1px solid #cfcfcf;
}
.group {
  flex: none;
  display: flex;
  flex-direction: column;
  justify-content: space-between;
  padding-top: 1px;
  border-right: 1px solid #d8d8d8;
}
.group h2 {
  display: flex;
  align-items: center;
  justify-content: center;
  gap: 5px;
  height: 18px;
}
.tools {
  display: grid;
  grid-auto-rows: 24px;
}
.tools button, .bigs button {
  display: flex;
  align-items: center;
  gap: 3px;
  height: 24px;
}
.tools .arrow {
  margin-left: 3px;
}
.g-select {
  margin-left: -2px;
}
.g-select .tools {
  grid-template-columns: 55px 80px;
}
.g-select h2 {
  justify-content: flex-start;
  padding-left: 10px;
}
.g-drawing .tools {
  grid-template-columns: 79px 103px;
  padding: 0 10px;
}
.g-common .tools {
  grid-template-columns: 67px 111px 78px;
  padding: 0 9px 0 10px;
}
.g-modify .tools {
  grid-template-columns: 54px 54px 63px 46px;
  padding: 0 9px 0 10px;
}
.g-draw .tools {
  grid-template-columns: 33px 28px;
  padding-left: 8px;
}
.bigs {
  display: flex;
}
.bigs .big {
  flex-direction: column;
  gap: 6px;
  height: 72px;
  padding-top: 3px;
}
.g-window .bigs {
  gap: 10px;
  padding: 0 10px 0 9px;
}
.g-smart .bigs {
  gap: 7px;
  padding: 0 12px 0 8px;
}
.g-edit .bigs {
  padding: 0 12px 0 10px;
}

/* drop-downs */
.combos {
  flex: none;
  display: flex;
  height: 31px;
  background: #f0f0f0;
  border-bottom: 1px solid #e2e2e2;
}
.combos label {
  position: relative;
  width: 100px;
  border-right: 1px solid #d4d4d4;
}
.combos label::after {
  content: "";
  position: absolute;
  right: 5px;
  top: 14px;
  border: 3px solid transparent;
  border-top-color: #555;
  border-bottom: 0;
}
.combos label:first-child {
  width: 101px;
}
.combos select {
  appearance: none;
  width: 100%;
  height: 30px;
  padding: 2px 3px 0;
  border: 0;
  background: none;
}
.combos label:first-child select {
  padding-left: 4px;
}

/* work area */
main {
  flex: 1;
  display: flex;
  min-height: 0;
}
.close {
  display: flex;
  margin-left: auto;
}
.close svg {
  width: 10px;
  height: 10px;
  stroke: #999;
}
.thumb {
  flex: none;
  width: 4px;
  border-radius: 2px;
  background: #e6e6e8;
}
.edge {
  flex: none;
  width: 28px;
  margin-right: 4px;
  border-right: 1px solid var(--line);
}
.edge-head {
  display: flex;
  align-items: center;
  height: 29px;
  padding-right: 9px;
  background: var(--head);
}
.edge-body {
  display: flex;
  gap: 4px;
  padding-top: 5px;
}
.edge-list {
  width: 15px;
  overflow: hidden;
}
.promo {
  display: flex;
  justify-content: flex-end;
  height: 19px;
  background: #f3c277;
  color: #7a4a10;
  line-height: 20px;
  white-space: nowrap;
}
.block {
  height: 42px;
  background: #f1f2f6;
}
.block.tall {
  height: 101px;
}
.space {
  display: flex;
  justify-content: flex-end;
  white-space: nowrap;
}
.space.one {
  height: 113px;
  padding-top: 92px;
}
.space.two {
  height: 224px;
  padding: 36px 10px 0 0;
}
.edge .thumb {
  height: 431px;
  margin-top: 7px;
}

.dock {
  flex: none;
  display: flex;
  flex-direction: column;
  gap: 4px;
  width: 483px;
  margin-right: 4px;
}
.dock-top {
  flex: none;
  display: flex;
  gap: 4px;
  height: 351px;
}
.panel {
  display: flex;
  flex-direction: column;
  border: 1px solid var(--line);
}
.panel header {
  flex: none;
  display: flex;
  align-items: center;
  height: 28px;
  padding: 0 9px 0 6px;
  background: var(--head);
}
.grip {
  width: 6px;
  height: 14px;
  stroke: #777;
}
.panel h3 {
  margin-left: 13px;
  padding-top: 2px;
}
.bar {
  flex: none;
  display: flex;
  height: 39px;
  padding: 6px 9px;
}
.bar button {
  display: flex;
  align-items: center;
  justify-content: center;
  width: 32px;
  height: 26px;
  border-radius: 2px;
  background: #f5f5f6;
}
.splitbtn {
  display: flex;
  gap: 1px;
}
.bar .drop {
  width: 12px;
}
.drop .arrow {
  border-top-color: #888;
}
.components {
  width: 173px;
}
.components .bar {
  gap: 9px;
}
.bar .expand {
  width: 26px;
  margin-left: auto;
  border: 1px solid #dcdcdc;
}
.expand i {
  border: 3px solid transparent;
  border-left: 4px solid #444;
  border-right: 0;
}
.search {
  display: flex;
  align-items: center;
  height: 26px;
  margin: 1px 9px 0 8px;
  padding: 0 11px 0 12px;
  border-radius: 13px;
  background: #f4f4f5;
}
.search input {
  flex: 1;
  min-width: 0;
  padding: 2px 0 0;
  border: 0;
  background: none;
  outline: none;
}
.search input::placeholder {
  color: #777;
}
.search svg {
  width: 12px;
  height: 12px;
  fill: none;
  stroke: #999;
}
.listwrap {
  display: flex;
  justify-content: space-between;
  padding: 11px 8px 0 12px;
}
.components ul {
  width: 103px;
  margin: 0;
  padding: 0;
  list-style: none;
}
.components li {
  height: 20px;
  margin-bottom: 4px;
  padding-left: 3px;
  border-radius: 2px;
  line-height: 22px;
  white-space: pre;
}
.components .on {
  background: #bfd7f2;
}
.components .thumb {
  height: 115px;
  margin-top: 69px;
}

.drawings {
  flex: 1;
}
.drawings .bar {
  gap: 9px;
  height: 40px;
  padding: 6px;
  border-bottom: 1px solid var(--line);
}
.treewrap {
  display: flex;
  gap: 4px;
}
.treebox {
  width: 292px;
  height: 269px;
  overflow: hidden;
}
.tree {
  width: 100%;
  border-spacing: 0;
}
.tree th {
  height: 25px;
  padding: 1px 0 0;
  background: #80baf9;
  color: #fff;
}
.tree .lockcol {
  width: 37px;
  border-left: 1px solid #6ba6e8;
}
.tree td {
  position: relative;
  height: 21px;
  padding: 2px 0 0 31px;
  border-bottom: 1px solid #d6d6d6;
  line-height: 16px;
  white-space: nowrap;
}
.tree td + td {
  padding: 0 1px 0 0;
  border-left: 1px solid #d6d6d6;
  border-right: 1px solid #d6d6d6;
}
.tree td .ic {
  display: block;
  margin: 0 auto;
}
.tree tr:not(.floor) td:first-child::before {
  content: "";
  position: absolute;
  left: 8px;
  top: 0;
  height: 21px;
  border-left: 1px solid #d8d8d8;
}
.tree .last td:first-child::before {
  height: 10px !important;
}
.tree tr:not(.floor) td:first-child::after {
  content: "";
  position: absolute;
  left: 9px;
  top: 9px;
  width: 16px;
  border-top: 1px solid #d8d8d8;
}
.tree .before td, .tree .current td {
  border-bottom: 2px solid #7c7c7c;
}
.tree .floor td {
  padding-left: 2px;
}
.fold {
  width: 13px;
  height: 13px;
  margin-right: 6px;
  border: 1px solid #888;
  border-radius: 2px;
  background: #fff;
  line-height: 10px;
  vertical-align: 1px;
}
.drawings .thumb {
  height: 21px;
  margin-top: 30px;
}
.hthumb {
  width: 178px;
  height: 4px;
  margin: 4px 0 0 12px;
  border-radius: 2px;
  background: #e6e6e8;
}

/* properties */
.props {
  flex: 1;
  min-height: 0;
  overflow: hidden;
  border-bottom: 0;
}
.props header {
  height: 30px;
  border-bottom: 1px solid #fff;
}
.ptab {
  height: 29px;
  padding: 0 10px;
}
.grip + .ptab {
  margin-left: 11px;
}
.ptab.active {
  background: #fff;
  color: #2b78e0;
}
.propwrap {
  display: flex;
  gap: 5px;
}
.props table {
  width: 468px;
  flex: none;
  border-spacing: 0;
  table-layout: fixed;
}
.props th {
  height: 25px;
  padding: 2px 0 0;
  border-right: 1px solid #cfcfcf;
  border-bottom: 1px solid #cfcfcf;
  background: #ebebeb;
  font-weight: normal;
}
.props .name {
  width: 101px;
}
.props .value {
  font-weight: bold;
}
.props .extra {
  width: 41px;
}
.props td {
  height: 25px;
  padding: 0;
}
.props td:first-child {
  padding-left: 15px;
  white-space: nowrap;
}
.props td:last-child {
  padding-bottom: 1px;
}
.props .section td {
  height: 24px;
  padding: 1px 0 0 8px;
  border-bottom: 1px solid #fff;
  background: #ebebeb;
}
.section .arrow {
  margin-right: 7px;
  vertical-align: 3px;
}
.key {
  color: #2455d6;
}
.props input[type="text"] {
  display: block;
  width: 100%;
  height: 21px;
  padding: 0 2px;
  border: 1px solid #d6d6d6;
}
.props input[readonly] {
  color: #888;
}
.props input[type="radio"] {
  appearance: none;
  display: block;
  width: 8px;
  height: 8px;
  margin: 0 auto;
  border: 1px solid #ababab;
  border-radius: 50%;
  background: #e2e2e2;
}
.props .thumb {
  margin-top: 12px;
}

/* drawing area */
.canvas {
  flex: 1;
  position: relative;
  min-width: 0;
  overflow: hidden;
  background: #000;
}
.canvas > svg {
  display: block;
  width: 100%;
  height: 100%;
}
.axis {
  fill: #fff;
  font: 18px "Noto Sans CJK SC", sans-serif;
  text-anchor: middle;
}
.cad {
  fill: #d8e89a;
  font: 300 26px "Noto Sans CJK SC", sans-serif;
}
.cad .teal {
  fill: #16847c;
}
.cad .small {
  font-size: 21px;
}
.collapse {
  position: absolute;
  left: 0;
  top: 380px;
  width: 16px;
  height: 62px;
  background: #4c4c4c;
  clip-path: polygon(0 0, 100% 8%, 100% 92%, 0 100%);
}
.collapse svg {
  width: 8px;
  height: 12px;
  fill: none;
  stroke: #aaa;
}
```
